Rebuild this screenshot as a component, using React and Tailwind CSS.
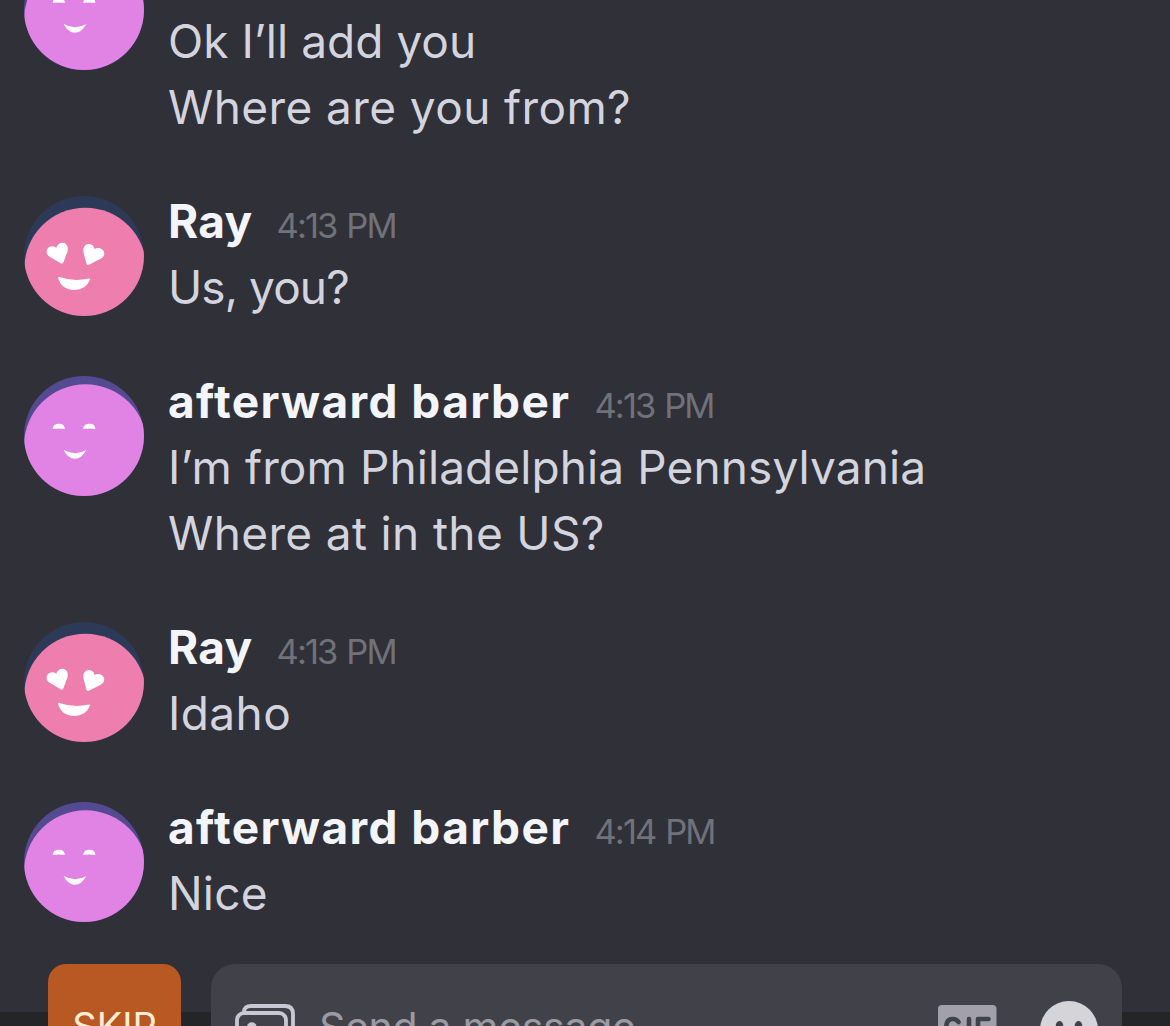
import React from 'react';
import clsx from 'clsx';

const conversation = [
  {
    author: 'afterward barber',
    scrolled: true,
    lines: [
      { text: 'Ok I’ll add you', tracking: 'tracking-[0.03px]' },
      { text: 'Where are you from?', tracking: 'tracking-[0.4px]' },
    ],
  },
  {
    author: 'Ray',
    time: '4:13 PM',
    lines: [{ text: 'Us, you?', tracking: 'tracking-[-0.9px]' }],
  },
  {
    author: 'afterward barber',
    time: '4:13 PM',
    lines: [
      { text: 'I’m from Philadelphia Pennsylvania', tracking: 'tracking-[0.1px]' },
      { text: 'Where at in the US?', tracking: 'tracking-[0.35px]' },
    ],
  },
  {
    author: 'Ray',
    time: '4:13 PM',
    lines: [{ text: 'Idaho', tracking: 'tracking-[0.4px]' }],
  },
  {
    author: 'afterward barber',
    time: '4:14 PM',
    lines: [{ text: 'Nice', tracking: 'tracking-[0.2px]' }],
  },
];

const RayAvatar = () => (
  <svg viewBox="0 0 120 120" className="size-[120px]">
    <clipPath id="ray-clip">
      <circle cx="60" cy="60" r="60" />
    </clipPath>
    <g clipPath="url(#ray-clip)">
      <rect width="120" height="120" fill="#2c3a58" />
      <circle cx="61.3" cy="72.7" r="61" fill="#ed7eae" />
      <path d="M37.7 67.8 Q36.8 67.8 35.5 66.6 L25.5 60.8 C20.5 57 22.5 50.5 28 50.2 C30 50 31.3 50.8 32.3 52 C33 48.5 36 46.6 39 46.7 C43.5 47.3 44.5 52 43.3 56 L39.3 66.5 Q38.7 67.8 37.7 67.8 Z" fill="#fff" />
      <path d="M63.7 69 Q62.7 68.8 62.4 67.5 L59.6 57 C58.5 51.5 61 48 65 48 C68.3 48.2 70 50.3 70.4 53 C71.8 52.2 74 51.8 76 52.3 C81 54 81.8 59.5 77.5 62.3 L66 68.3 Q64.7 69 63.7 69 Z" fill="#fff" />
      <path d="M34 81.5 Q34.3 80.7 35.5 81 Q50 86 64.5 82.5 Q66.3 82.3 66 83.5 Q62 94 50.3 94 Q37 93.5 34 81.5 Z" fill="#fff" />
    </g>
  </svg>
);

const BarberAvatar = () => (
  <svg viewBox="0 0 120 120" className="size-[120px]">
    <clipPath id="barber-clip">
      <circle cx="60" cy="60" r="60" />
    </clipPath>
    <g clipPath="url(#barber-clip)">
      <rect width="120" height="120" fill="#544a91" />
      <circle cx="61.5" cy="69.8" r="61.5" fill="#e083e4" />
      <path d="M28.7 53 Q29 47.7 35 47.7 Q40.7 47.7 40.8 53 Q35 52.2 28.7 53 Z" fill="#fff" />
      <path d="M59.2 53 Q59.5 47.7 65.5 47.7 Q71.2 47.7 71.3 53 Q65.5 52.2 59.2 53 Z" fill="#fff" />
      <path d="M39.5 73.7 Q51 80.5 62.3 73.9 Q57.5 82.6 50.8 82.7 Q44 82.6 39.5 73.7 Z" fill="#fff" />
    </g>
  </svg>
);

const Message = ({ author, time, lines, scrolled }) => (
  <article className="flex gap-6 pl-6">
    <div className="shrink-0 pt-[6px]">{author === 'Ray' ? <RayAvatar /> : <BarberAvatar />}</div>
    <div className="-mt-[2px] pb-[2px] text-[46px] leading-[66px] whitespace-nowrap">
      <header className="flex h-[66px] items-baseline gap-6">
        {!scrolled && (
          <>
            <h2 className={clsx('font-bold text-[#f4f4fb]', author === 'Ray' ? 'tracking-[0.3px]' : 'tracking-[1.4px]')}>{author}</h2>
            <time className="text-[34.5px] tracking-[-1.9px] text-[#71717a] [word-spacing:2px]">{time}</time>
          </>
        )}
      </header>
      {lines.map((line) => (
        <p key={line.text} className={clsx('font-[370] text-[#d4d4df]', line.tracking)}>{line.text}</p>
      ))}
    </div>
  </article>
);

const Composer = () => (
  <footer className="flex h-[62px] shrink-0 items-start gap-[30px] overflow-hidden bg-[linear-gradient(#2f3038_48px,#242529_48px)] pr-12 pl-12">
    <button className="flex h-[132px] w-[133px] shrink-0 items-start justify-center rounded-[18px] bg-[#b85822] pt-[32px] text-[38px] leading-[60px] text-[#ffeed5]">SKIP</button>
    <div className="flex h-[132px] flex-1 items-start rounded-[24px] bg-[#414149] pt-[36px] pl-6">
      <svg viewBox="0 0 60 60" className="mt-[3px] size-[60px] shrink-0" fill="none" stroke="#c9c8d2" strokeWidth="3.8">
        <path d="M9 9 Q9 3 16 3 H50 Q58 3 58 11 V38 Q58 43 53 43" />
        <rect x="2" y="10" width="49" height="42" rx="7" />
        <circle cx="16.8" cy="24.3" r="5" fill="#c9c8d2" stroke="none" />
      </svg>
      <span className="mt-[2px] ml-6 text-[41px] leading-[50px] font-[370] tracking-[-0.3px] whitespace-nowrap text-[#9b9aa3]">Send a message</span>
      <div className="mr-6 ml-auto flex items-start gap-[43px]">
        <svg viewBox="0 0 59 40" className="mt-[5px] h-[40px] w-[59px]">
          <rect width="58.5" height="60" rx="4" fill="#a1a0ab" />
          <path d="M20.5 17 Q18.5 14 14.8 14 Q8.3 14 8.3 22 M31 14 V40 M40 40 V14 H50.5" fill="none" stroke="#414149" strokeWidth="4.6" strokeLinecap="round" strokeLinejoin="round" />
        </svg>
        <svg viewBox="0 0 58 58" className="mt-px size-[58px]">
          <circle cx="29" cy="29" r="29" fill="#d4d4d9" />
          <ellipse cx="19.5" cy="25" rx="3.8" ry="5" fill="#414149" />
          <ellipse cx="38.5" cy="25" rx="3.8" ry="5" fill="#414149" />
        </svg>
      </div>
    </div>
  </footer>
);

export default function App() {
  return (
    <div className="flex h-screen w-full flex-col overflow-hidden bg-[#2f3038] font-['Inter',sans-serif]">
      <main className="flex min-h-0 flex-1 flex-col justify-end gap-12 overflow-hidden pb-[36px]">
        {conversation.map((message, i) => (
          <Message key={i} {...message} />
        ))}
      </main>
      <Composer />
    </div>
  );
}
